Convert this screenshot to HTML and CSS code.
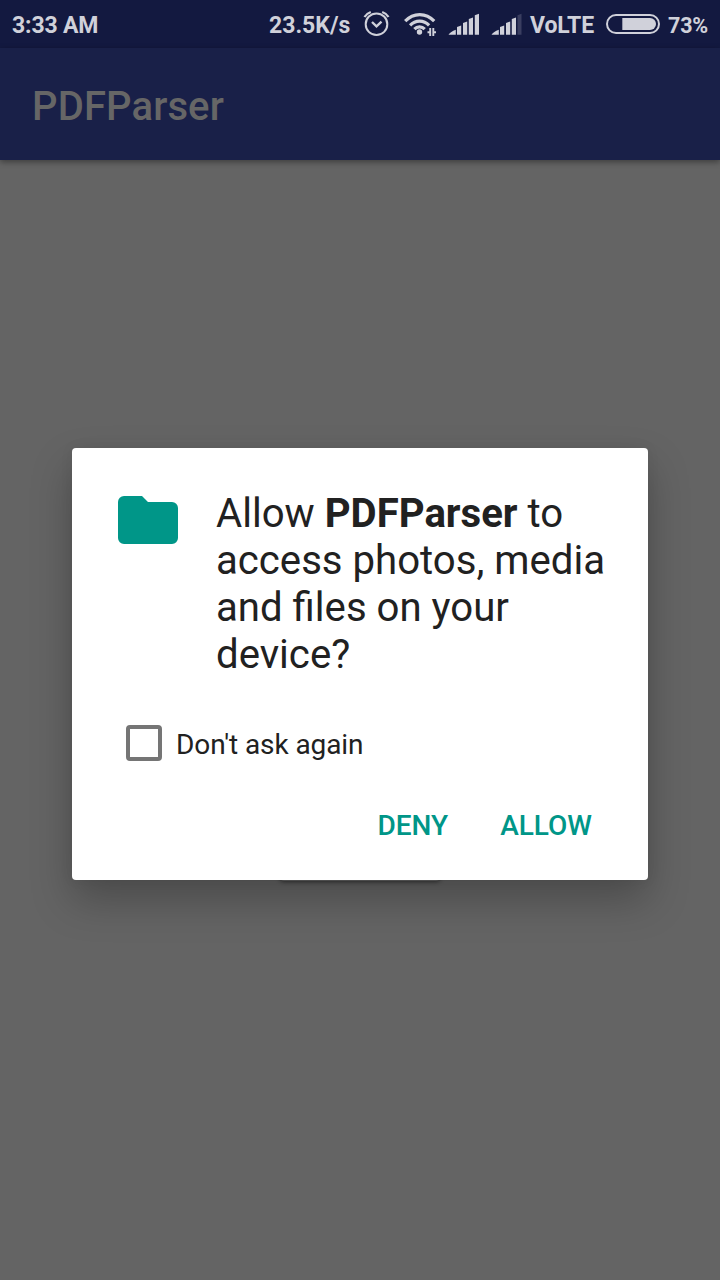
FILE: index.html
```html
<!DOCTYPE html>
<html lang="en">
<head>
<meta charset="utf-8">
<title>PDFParser</title>
<link rel="stylesheet" href="styles.css">
</head>
<body>
<div class="screen">
  <header class="status-bar">
    <span class="clock">3:33 AM</span>
    <span class="speed">23.5K/s</span>
    <svg class="status-icon" viewBox="0 0 180 48" width="180" height="48">
      <g fill="none" stroke="currentColor" stroke-width="2">
        <circle cx="16.5" cy="24.2" r="10.8"/>
        <path d="M12 22l4.500 4.300 5-4.600" stroke-width="2.4"/>
        <path d="M4.500 17q2.200-3.500 6.300-5M22.200 12q4.300 1.500 6.300 5" stroke-width="2.3"/>
      </g>
      <g fill="none" stroke="currentColor" stroke-width="3.2">
        <path d="M45.200 21.200c8.200-8.800 20.800-8.800 29 0"/>
        <path d="M50.100 25.300c5.300-5.600 13.700-5.600 19 0"/>
        <path d="M54.400 29.200c2.800-3 7.500-3 10.300 0"/>
      </g>
      <circle cx="59.500" cy="32" r="2.700" fill="currentColor"/>
      <path d="M70.200 28v8M73.300 28v8M67.500 32.200h2.500M74 32.200h2" stroke="currentColor" stroke-width="1.9"/>
      <path fill="currentColor" d="M88.500 34.700q2-3 7.300-4.900v4.900zM97 34.700V27l4.200-1.500v9.200zM103 34.700V23l4.200-1.500v13.200zM108.800 34.700V19l4.200-1.500v17.200zM114.800 34.700V15.200l4.200-1.500v21z"/>
      <path fill="currentColor" d="M131.500 34.700q2-3 7.300-4.900v4.900zM140 34.700V27l4.200-1.500v9.200zM146 34.700V23l4.200-1.500v13.200zM151.800 34.700V19l4.200-1.500v17.200z"/>
      <path class="signal-off" d="M157.500 34.700V15.200l4-1.500v21z"/>
    </svg>
    <span class="network">VoLTE</span>
    <svg class="battery" viewBox="0 0 54 20" width="54" height="20">
      <rect x="1" y="1" width="52" height="18" rx="9" fill="none" stroke="currentColor" stroke-width="2"/>
      <path d="M16.300 4h27.700a6 6 0 0 1 0 12H16.300z" fill="currentColor"/>
    </svg>
    <span class="percent">73%</span>
  </header>
  <div class="app-bar"><h1 class="app-title">PDFParser</h1></div>
  <main class="content">
    <div class="app-button"></div>
    <section class="dialog" role="dialog">
      <div class="dialog-body">
        <svg class="folder" viewBox="0 0 60 48" width="60" height="48">
          <path d="M6 0h18l6 6h24a6 6 0 0 1 6 6v30a6 6 0 0 1-6 6H6a6 6 0 0 1-6-6V6a6 6 0 0 1 6-6z"/>
        </svg>
        <p class="message">Allow <b>PDFParser</b> to<br>access photos, media<br>and files on your<br>device?</p>
      </div>
      <label class="remember"><span class="checkbox"></span><span class="remember-text">Don't ask again</span></label>
      <div class="actions">
        <span class="action deny">DENY</span>
        <span class="action allow">ALLOW</span>
      </div>
    </section>
  </main>
</div>
</body>
</html>
```
FILE: styles.css
```css
* { box-sizing: border-box; }
body { margin: 0; font-family: Roboto, sans-serif; }
.screen {
  display: flex;
  flex-direction: column;
  width: 720px;
  height: 1280px;
  overflow: hidden;
  background: #646464;
}
.status-bar {
  display: grid;
  grid-template-columns: 257px 91px 170px 76px 62px 1fr;
  align-items: center;
  height: 48px;
  padding: 0 0 0 12px;
  background: #131940;
  color: #d0d1da;
  font-size: 23px;
  font-weight: 700;
  line-height: 28px;
  white-space: nowrap;
}
.status-bar span { padding-top: 4px; }
.clock { letter-spacing: -.15px; }
.network { letter-spacing: -.1px; }
.percent { font-size: 21.5px; letter-spacing: -.2px; }
.signal-off { fill: #3a3e60; }
.app-bar {
  display: flex;
  align-items: center;
  height: 112px;
  flex: none;
  padding: 6px 32px 0;
  background: #192048;
  box-shadow: 0 2px 6px rgba(0, 0, 0, .4);
  z-index: 1;
}
.app-title {
  margin: 0;
  color: #666;
  font-size: 40px;
  font-weight: 500;
  line-height: 48px;
  letter-spacing: .12px;
}
.content {
  position: relative;
  flex: 1;
  padding: 288px 72px 0;
}
.app-button {
  position: absolute;
  left: 280px;
  top: 630px;
  width: 160px;
  height: 91px;
  border-radius: 4px;
  box-shadow: 0 1px 4px rgba(0, 0, 0, .5);
}
.dialog {
  position: relative;
  height: 432px;
  padding: 42px 40px 0 46px;
  border-radius: 4px;
  background: #fff;
  color: #212121;
  box-shadow: 0 20px 40px rgba(0, 0, 0, .25), 0 0 14px rgba(0, 0, 0, .06);
}
.dialog-body { display: flex; gap: 38px; }
.folder { flex: none; margin-top: 6px; fill: #009688; }
.message {
  margin: 0;
  font-size: 40.15px;
  line-height: 47px;
  white-space: nowrap;
}
.remember {
  display: flex;
  align-items: center;
  gap: 14px;
  margin: 47px 0 0 8px;
  height: 36px;
}
.checkbox {
  width: 36px;
  height: 36px;
  border: 4px solid #757575;
  border-radius: 4px;
}
.remember-text { font-size: 28px; line-height: 33px; padding-top: 2px; letter-spacing: -.08px; }
.actions {
  display: flex;
  justify-content: flex-end;
  gap: 52px;
  margin-top: 48px;
  padding-right: 16px;
  color: #009688;
  font-size: 28px;
  font-weight: 500;
  line-height: 33px;
}
```
